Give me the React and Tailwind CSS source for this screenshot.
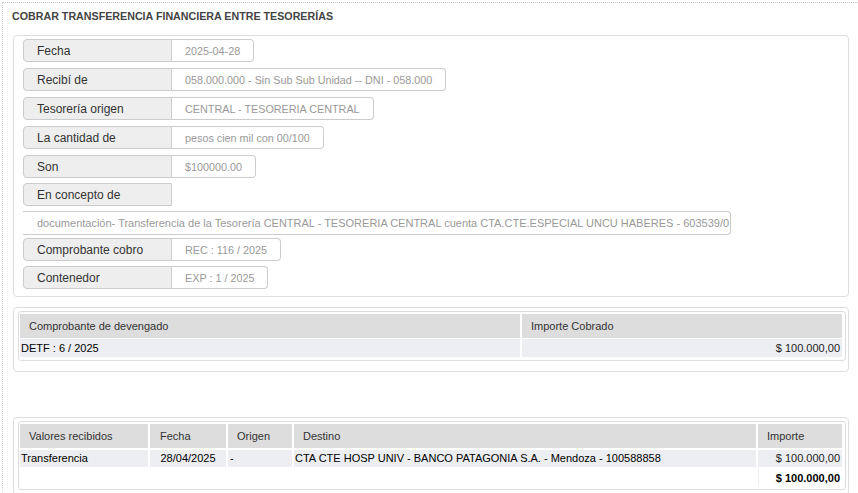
const rows = [
  { label: 'Fecha', value: '2025-04-28' },
  { label: 'Recibí de', value: '058.000.000 - Sin Sub Sub Unidad -- DNI - 058.000' },
  { label: 'Tesorería origen', value: 'CENTRAL - TESORERIA CENTRAL' },
  { label: 'La cantidad de', value: 'pesos cien mil con 00/100' },
  { label: 'Son', value: '$100000.00' },
];

const Field = ({ label, value, className = '' }) => (
  <div className={`flex h-[23px] ${className}`}>
    <div className="w-[149px] h-full flex items-center pl-[13px] text-[12px] text-[#333] bg-[#eeeeee] border border-[#cccccc] rounded-l-[4px]">
      {label}
    </div>
    {value !== undefined && (
      <div className="h-full flex items-center px-[13px] pt-[2px] text-[10.8px] text-[#999] bg-white border border-l-0 border-[#cccccc] rounded-r-[4px]">
        {value}
      </div>
    )}
  </div>
);

const App = () => {
  return (
    <div className="w-full h-[493px] overflow-hidden bg-white pt-[2px] pl-[2px] font-['Liberation_Sans',Arial,sans-serif]">
      <div className="border-t border-l border-dotted border-[#cccccc] pl-[10px] pt-[6px] h-[600px] w-[900px]">
        <h1 className="-ml-px text-[10.7px] leading-[14px] font-bold text-[#444]">
          COBRAR TRANSFERENCIA FINANCIERA ENTRE TESORERÍAS
        </h1>

        <div className="mt-[12px] w-[836px] border border-[#dddddd] rounded-[4px] pl-[9px] pt-[3px] pb-[7px]">
          {rows.map((r) => (
            <Field key={r.label} label={r.label} value={r.value} className="mb-[6px]" />
          ))}
          <Field label="En concepto de" className="-mt-px" />
          <div className="mt-[5px] w-[708px] h-[24px] flex items-center pl-[14px] pt-[1px] text-[11px] text-[#999] border border-l-0 border-[#cccccc] rounded-r-[4px]">
            documentación- Transferencia de la Tesorería CENTRAL - TESORERIA CENTRAL cuenta CTA.CTE.ESPECIAL UNCU HABERES - 603539/0
          </div>
          <Field label="Comprobante cobro" value="REC : 116 / 2025" className="mt-[3px]" />
          <Field label="Contenedor" value="EXP : 1 / 2025" className="mt-[5px]" />
        </div>

        <div className="mt-[10px] w-[836px] border border-[#dddddd] rounded-[4px] pl-[4px] pr-[2px] pt-[3px] pb-[10px]">
          <div className="border border-[#dddddd] rounded-[3px] pl-px pr-[3px] pt-[2px] pb-[3px]">
            <div className="grid grid-cols-[500px_320px] gap-x-[2px] gap-y-px text-[11px]">
              <div className="h-[24px] flex items-center pl-[9px] bg-[#dddddd] text-[#333]">Comprobante de devengado</div>
              <div className="h-[24px] flex items-center pl-[9px] bg-[#dddddd] text-[#333]">Importe Cobrado</div>
              <div className="h-[18px] flex items-center pl-px bg-[#edeef1] text-black">DETF : 6 / 2025</div>
              <div className="h-[18px] flex items-center justify-end pr-[2px] bg-[#edeef1] text-[#222]">$ 100.000,00</div>
            </div>
          </div>
        </div>

        <div className="mt-[45px] w-[836px] border border-[#dddddd] rounded-[4px] pl-[4px] pr-[2px] pt-[3px] pb-[5px]">
          <div className="border border-[#dddddd] rounded-[3px] pl-px pr-[3px] pt-[2px] pb-[2px]">
            <div className="grid grid-cols-[128px_76px_64px_462px_84px] gap-x-[2px] gap-y-[2px] text-[11px]">
              <div className="h-[24px] flex items-center pl-[9px] bg-[#dddddd] text-[#333]">Valores recibidos</div>
              <div className="h-[24px] flex items-center pl-[10px] bg-[#dddddd] text-[#333]">Fecha</div>
              <div className="h-[24px] flex items-center pl-[9px] bg-[#dddddd] text-[#333]">Origen</div>
              <div className="h-[24px] flex items-center pl-[9px] bg-[#dddddd] text-[#333]">Destino</div>
              <div className="h-[24px] flex items-center pl-[9px] bg-[#dddddd] text-[#333]">Importe</div>

              <div className="h-[17px] flex items-center pl-px bg-[#edeef1] text-black">Transferencia</div>
              <div className="h-[17px] flex items-center justify-center bg-[#edeef1] text-black">28/04/2025</div>
              <div className="h-[17px] flex items-center pl-[2px] bg-[#edeef1] text-black">-</div>
              <div className="h-[17px] flex items-center pl-px bg-[#edeef1] text-black">CTA CTE HOSP UNIV - BANCO PATAGONIA S.A. - Mendoza - 100588858</div>
              <div className="h-[17px] flex items-center justify-end pr-[2px] bg-[#edeef1] text-[#222]">$ 100.000,00</div>

              <div className="h-[18px]" />
              <div className="h-[18px]" />
              <div className="h-[18px]" />
              <div className="h-[18px]" />
              <div className="h-[18px] flex items-center justify-end pr-[2px] border-l border-[#eeeeee] font-bold text-black">$ 100.000,00</div>
            </div>
          </div>
        </div>
      </div>
    </div>
  );
};

export default App;
